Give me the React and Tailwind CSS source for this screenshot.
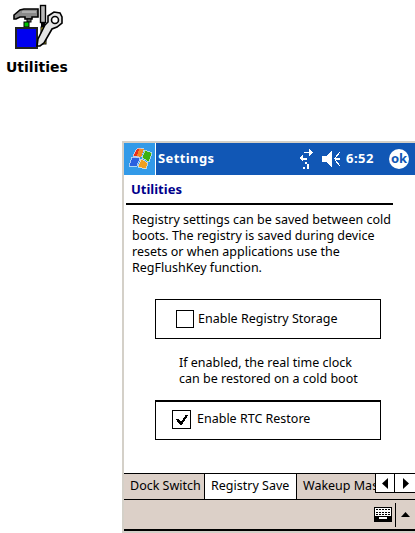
function Flag() {
  return (
    <svg width="26" height="26" viewBox="0 0 26 26" shapeRendering="crispEdges">
      <path d="M9 4 L11 2 L17 3 L14 11 L6 10 Z" fill="#e8301c" stroke="#fff" strokeWidth="0.6" />
      <path d="M12 3 L17 3 L14 11 L10 10 Z" fill="#f08a20" />
      <path d="M18 4 L25 7 L22 16 L15 12 Z" fill="#3cb010" stroke="#fff" strokeWidth="0.6" />
      <path d="M5 11 L13 12 L10 20 L2 20 Z" fill="#2a60e0" stroke="#fff" strokeWidth="0.6" />
      <path d="M14 13 L21 17 L19 23 L11 21 Z" fill="#f0a020" stroke="#fff" strokeWidth="0.6" />
    </svg>
  );
}
function Tools() {
  return (
    <svg width="52" height="46" viewBox="12 4 52 46">
      <path d="M14 19 L14 15 L20 10 L24 9 H38 V17 H32 V19 H25 V17 H20 L16 19 Z" fill="#8a8a8a" stroke="#000" strokeWidth="1.6" />
      <path d="M22 12 H36" stroke="#d0d0d0" strokeWidth="1" />
      <rect x="27" y="19" width="4" height="3" fill="#666" stroke="#000" />
      <rect x="24" y="22" width="5" height="5" fill="#00c000" stroke="#000" />
      <rect x="16" y="28" width="21" height="20" fill="#0000f0" stroke="#222" strokeWidth="2" />
      <rect x="40.5" y="5.5" width="5" height="17" fill="#b8b8b8" stroke="#000" strokeWidth="1.4" />
      <rect x="41" y="23" width="4" height="4" fill="#000" />
      <rect x="41" y="27" width="5" height="17" fill="#e8d820" stroke="#000" />
      <path d="M37 46 L38 39 L45 25 L48 22 L48 16 L54 12 L60 13 L62 17 L62 23 L57 27 L52 29 L44 43 L40 46 Z" fill="#e4e4e4" stroke="#000" strokeWidth="1.6" />
      <circle cx="55" cy="20" r="3.5" fill="#fff" stroke="#000" strokeWidth="1.6" />
    </svg>
  );
}
function Sync() {
  return (
    <svg width="14" height="20" viewBox="0 0 14 20" shapeRendering="crispEdges" fill="#fff">
      <rect x="5" y="3" width="7" height="1" />
      <path d="M10 0 L14 3.5 L10 7 Z" />
      <path d="M0 9 L4 6 V13 Z" />
      <rect x="4" y="9" width="4" height="2" />
      <rect x="6" y="13" width="2" height="2" />
      <rect x="8" y="15" width="2" height="5" />
      <rect x="4" y="18" width="2" height="2" />
    </svg>
  );
}
function Speaker() {
  return (
    <svg width="19" height="18" viewBox="0 0 19 18" fill="#fff" shapeRendering="crispEdges">
      <path d="M0 6 H4 L10 1 V17 L4 12 H0 Z" />
      <path d="M18 2 L13 8 H18 M13 9 H18 M13 10 L18 16" stroke="#fff" strokeWidth="1" fill="none" />
    </svg>
  );
}
function Check() {
  return (
    <svg width="16" height="16" viewBox="0 0 16 16" shapeRendering="crispEdges">
      <path d="M3 7 L7 12 L13 3" stroke="#000" strokeWidth="2.4" fill="none" />
    </svg>
  );
}
function Keyboard() {
  return (
    <svg width="18" height="15" viewBox="0 0 18 15" shapeRendering="crispEdges">
      <rect x="0.5" y="0.5" width="17" height="14" fill="#fff" stroke="#000" />
      <path d="M2 2.5 H16 M2 5 H16 M2 7.5 H16" stroke="#000" strokeDasharray="2 1" />
      <rect x="1" y="9" width="16" height="5" fill="#000" />
      <rect x="5" y="10" width="8" height="2" fill="#fff" />
    </svg>
  );
}
export default function App() {
  return (
    <div className="w-[415px] h-[533px] bg-white overflow-hidden flex flex-col font-['Noto_Sans',sans-serif] text-black">
      <div className="h-[141px] pl-[6px] pt-[4px] flex flex-col items-start">
        <div className="pl-[6px]"><Tools /></div>
        <div className="font-['DejaVu_Sans',sans-serif] font-bold text-[14px] leading-[18px] mt-[8px]">Utilities</div>
      </div>
      <div className="ml-[122px] flex-1 flex flex-col border-l-2 border-t-2 border-[#d4d0c8] border-b-2">
        <div className="h-[32px] bg-[#1157b5] flex items-center text-white shrink-0">
          <div className="w-[31px] h-full bg-[#329ae8] flex items-center justify-center border-r border-white box-content"><Flag /></div>
          <div className="ml-[2px] font-bold text-[13px] tracking-[0.4px]">Settings</div>
          <div className="ml-auto flex items-center">
            <Sync />
            <div className="ml-[9px]"><Speaker /></div>
            <div className="ml-[5px] font-bold text-[13px] tracking-[0.5px]">6:52</div>
            <div className="ml-[15px] mr-[6px] w-[20px] h-[20px] rounded-full bg-white text-[#1157b5] font-bold text-[13px] leading-[19px] text-center">ok</div>
          </div>
        </div>
        <div className="flex-1 flex flex-col relative">
          <div className="pl-[7px] pt-[5px] text-[13px] leading-[18px] font-bold text-[#00008b] h-[28px]">Utilities</div>
          <div className="ml-[2px] w-[267px] h-[2px] bg-black"></div>
          <p className="pl-[8px] pt-[7px] text-[12.5px] leading-[16px] whitespace-nowrap">Registry settings can be saved between cold<br />boots. The registry is saved during device<br />resets or when applications use the<br />RegFlushKey function.</p>
          <div className="ml-[31px] mt-[23px] w-[226px] h-[40px] border border-black flex items-center pl-[20px] gap-[4px] text-[12.5px]">
            <div className="w-[18px] h-[18px] border border-black"></div>
            <span>Enable Registry Storage</span>
          </div>
          <div className="ml-[55px] mt-[16px] text-[12.5px] leading-[16px]">If enabled, the real time clock<br />can be restored on a cold boot</div>
          <div className="ml-[31px] mt-[13px] w-[226px] h-[40px] border border-black border-t-2 flex items-center pl-[16px] gap-[6px] pb-[2px] text-[12.5px]">
            <div className="w-[19px] h-[19px] border border-black flex items-center justify-center"><Check /></div>
            <span>Enable RTC Restore</span>
          </div>
          <div className="flex-1"></div>
          <div className="h-[27px] flex items-stretch text-[12.5px] relative border-t border-black border-b overflow-hidden bg-[#dcd0c8]">
            <div className="w-[81px] pl-[6px] flex items-center border-r border-black">Dock Switch</div>
            <div className="w-[92px] bg-white pl-[6px] flex items-center border-r border-black">Registry Save</div>
            <div className="pl-[6px] flex items-center whitespace-nowrap">Wakeup Mas</div>
            <div className="absolute right-0 top-0 w-[40px] h-[19px] bg-white border-l border-b border-black flex">
              <div className="w-[19px] border-r border-black flex items-center justify-center">
                <svg width="7" height="11" viewBox="0 0 7 11"><path d="M6 0 V11 L0 5.5 Z" fill="#000" /></svg>
              </div>
              <div className="flex-1 flex items-center justify-center">
                <svg width="7" height="11" viewBox="0 0 7 11"><path d="M1 0 V11 L7 5.5 Z" fill="#000" /></svg>
              </div>
            </div>
          </div>
          <div className="h-[31px] bg-[#dcd0c8] border-b-2 border-black flex items-center justify-end">
            <Keyboard />
            <div className="ml-[3px] w-[1px] h-[24px] bg-black"></div>
            <div className="w-[19px] flex justify-center">
              <svg width="9" height="5" viewBox="0 0 9 5"><path d="M0 5 L4.5 0 L9 5 Z" fill="#000" /></svg>
            </div>
          </div>
        </div>
      </div>
    </div>
  );
}
